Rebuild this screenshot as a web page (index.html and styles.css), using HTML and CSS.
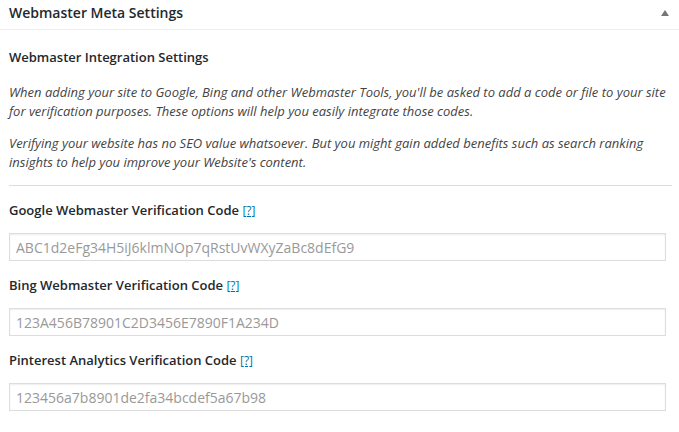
FILE: index.html
```html
<!DOCTYPE html>
<html>
<head>
<meta charset="utf-8">
<link rel="stylesheet" href="styles.css">
</head>
<body>
<div class="box">
  <div class="box-header">
    <h2 class="box-title">Webmaster Meta Settings</h2>
    <span class="toggle"></span>
  </div>
  <div class="box-body">
    <h3 class="section-title">Webmaster Integration Settings</h3>
    <p class="desc">When adding your site to Google, Bing and other Webmaster Tools, you'll be asked to add a code or file to your site for verification purposes. These options will help you easily integrate those codes.</p>
    <p class="desc">Verifying your website has no SEO value whatsoever. But you might gain added benefits such as search ranking insights to help you improve your Website's content.</p>
    <div class="divider"></div>
    <div class="field">
      <label class="field-label">Google Webmaster Verification Code <a class="help" href="#">[?]</a></label>
      <input class="field-input" type="text" value="ABC1d2eFg34H5iJ6klmNOp7qRstUvWXyZaBc8dEfG9">
    </div>
    <div class="field">
      <label class="field-label">Bing Webmaster Verification Code <a class="help" href="#">[?]</a></label>
      <input class="field-input" type="text" value="123A456B78901C2D3456E7890F1A234D">
    </div>
    <div class="field">
      <label class="field-label">Pinterest Analytics Verification Code <a class="help" href="#">[?]</a></label>
      <input class="field-input" type="text" value="123456a7b8901de2fa34bcdef5a67b98">
    </div>
  </div>
</div>
</body>
</html>
```
FILE: styles.css
```css
html, body {
  margin: 0;
  padding: 0;
  background: #fff;
}
body {
  font-family: "Open Sans", "Liberation Sans", sans-serif;
  color: #444;
  font-size: 13px;
}
.box {
  width: 679px;
}
.box-header {
  height: 30px;
  border-bottom: 1px solid #eeeeee;
  display: flex;
  align-items: center;
  justify-content: space-between;
  padding: 0 9px;
  box-sizing: border-box;
  position: relative;
}
.box-title {
  margin: 0;
  font-size: 14px;
  font-weight: 600;
  color: #23282d;
  line-height: 1;
  margin-top: -4px;
}
.toggle {
  width: 0;
  height: 0;
  border-left: 4px solid transparent;
  border-right: 4px solid transparent;
  border-bottom: 6px solid #72777c;
  margin-right: 1px;
  margin-top: -4px;
}
.box-body {
  padding: 0 13px 0 9px;
}
.section-title {
  margin: 18px 0 0;
  font-size: 13px;
  font-weight: 600;
  color: #23282d;
  line-height: 19px;
}
.desc {
  margin: 16px 0 0;
  font-style: italic;
  line-height: 19px;
  color: #444;
}
.desc + .desc {
  margin-top: 13px;
}
.divider {
  border-top: 1px solid #dddddd;
  margin: 13px -6px 0 0;
}
.field {
  display: flex;
  flex-direction: column;
}
.field-label {
  font-weight: 600;
  color: #23282d;
  line-height: 19px;
  margin-top: 15px;
}
.help {
  color: #0073aa;
  font-weight: 400;
  font-size: 12px;
  text-decoration: underline;
}
.field-input {
  margin-top: 13px;
  width: 657px;
  height: 28px;
  box-sizing: border-box;
  border: 1px solid #dddddd;
  box-shadow: inset 0 1px 2px rgba(0,0,0,0.07);
  padding: 0 6px;
  font-family: "Open Sans", "Liberation Sans", sans-serif;
  font-size: 14px;
  color: #999;
  background: #fff;
  outline: none;
}
```
